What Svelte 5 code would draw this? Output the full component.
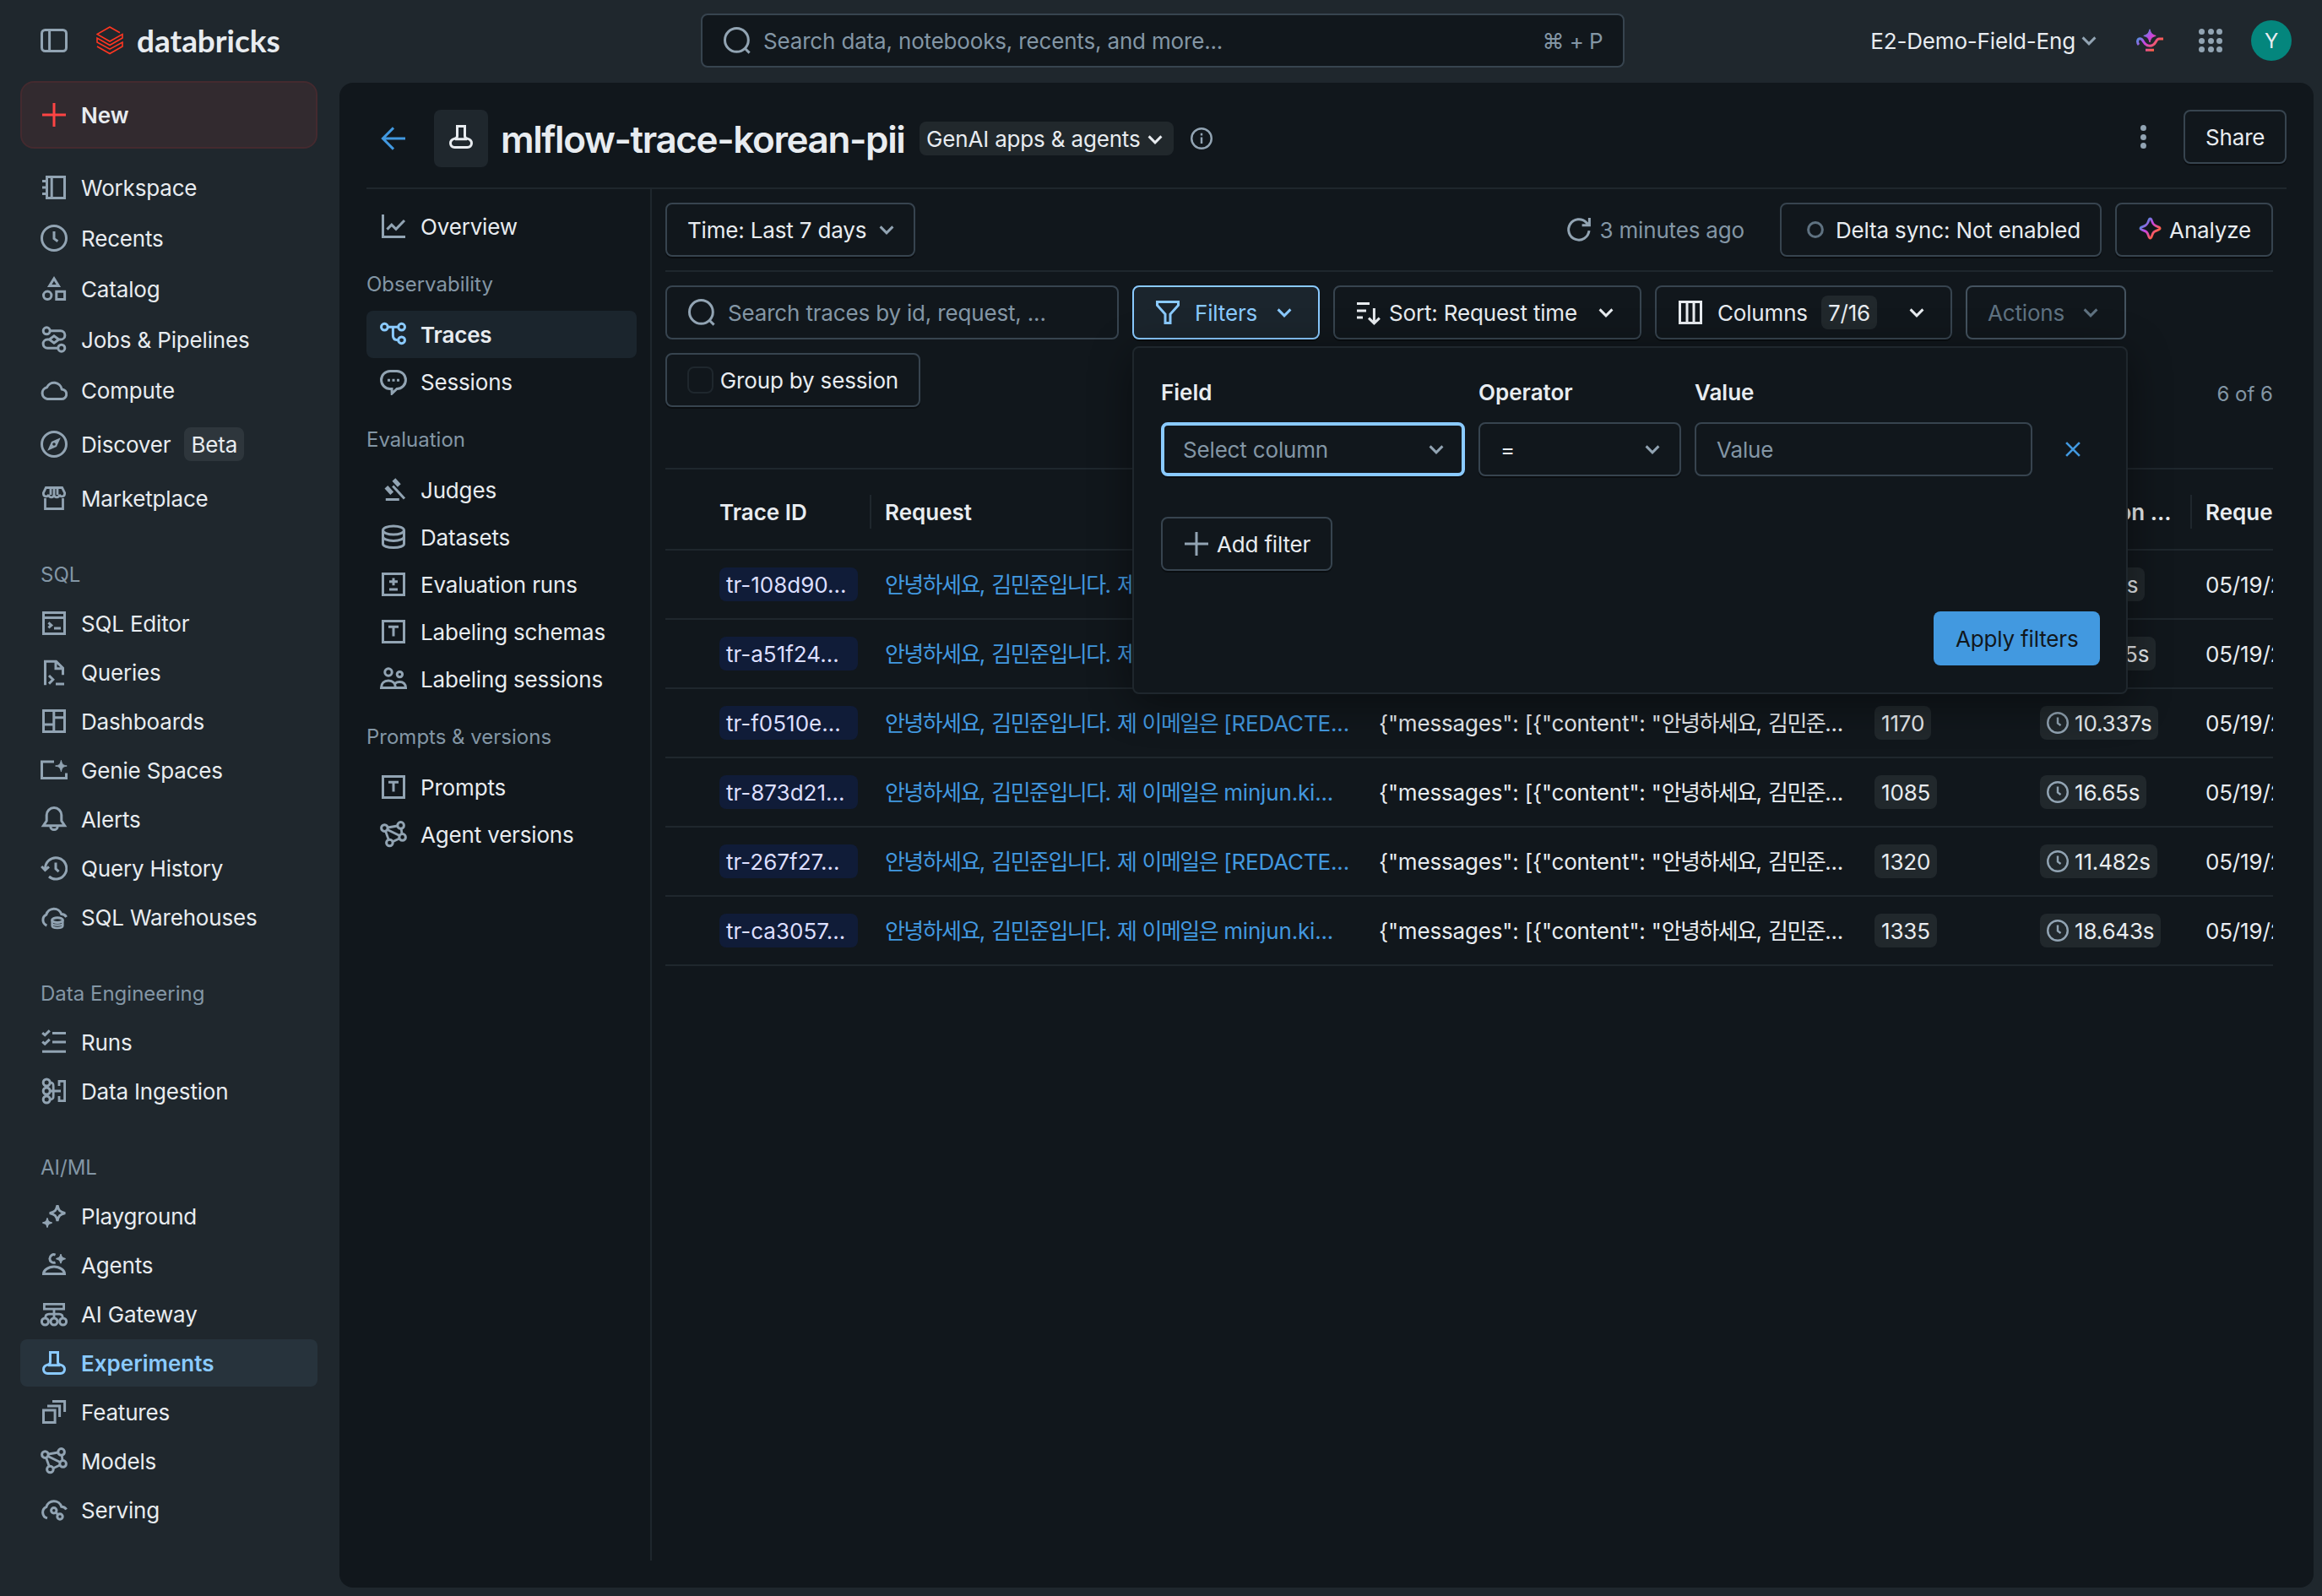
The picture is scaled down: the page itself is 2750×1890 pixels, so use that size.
<script lang="ts">
	const ICONS: Record<string, string> = {
		plus: '<path d="M8 1v14M1 8h14"/>',
		notebook: '<path d="M3.75 1.75h10.5v12.5H3.75zM6.6 1.75v12.5M1 4.2h2.5M1 8h2.5M1 11.8h2.5"/>',
		clock: '<circle cx="8" cy="8" r="7.25"/><path d="M8 4v4.3l2.2 1.6"/>',
		catalog: '<path d="M8 1.9l2.7 4.4H5.3z"/><circle cx="4.1" cy="11.9" r="2.35"/><path d="M9.4 9.6h4.9v4.6H9.4z"/>',
		jobs: '<circle cx="3.6" cy="2.9" r="2"/><circle cx="12.4" cy="13.1" r="2"/><path d="M5.7 2.9h6.2a2.5 2.5 0 0 1 0 5.1H10.8L8 5.9 5.2 8 8 10.1 10.8 8M5.2 8H4.1a2.5 2.5 0 0 0 0 5.1h6.2"/>',
		cloud: '<path d="M4 13.25h8.3a2.9 2.9 0 0 0 .3-5.8A4.7 4.7 0 0 0 3.7 6.4 3.5 3.5 0 0 0 4 13.25z"/>',
		compass: '<circle cx="8" cy="8" r="7.25"/><path d="M11.9 4.1L9.5 9.5 4.1 11.9 6.5 6.5zM8 7.1a.9.9 0 1 0 0 1.8.9.9 0 0 0 0-1.8z" fill="currentColor" fill-rule="evenodd" stroke="none"/>',
		store: '<path d="M2.75 8v6.25h10.5V8M3.2 1.75h9.6l1.5 3v.7a1.6 1.6 0 0 1-3.1.4 1.6 1.6 0 0 1-3.2 0 1.6 1.6 0 0 1-3.2 0 1.6 1.6 0 0 1-3.1-.4v-.7zM6 2v4M8 2v4M10 2v4" stroke-width="1.4"/>',
		sql: '<path d="M1.75 1.75h12.5v12.5H1.75zM1.75 4.8h12.5M4.7 7.7L6.4 9.2 4.7 10.7M8 11h4"/>',
		query: '<path d="M2.75 15.6V1.6h6.5l4 4v4M9 2v3.9h4M5 10l2.4 2.4L5 14.8M9 15h5"/>',
		dashboard: '<path d="M1.75 1.75h12.5v12.5H1.75zM7.9 2v12M8 5.9h6M2 10h6"/>',
		genie: '<path d="M8 3H.75v9.7h14.5V9.8"/><path d="M12.2 2.2c.5 2.3 1 2.9 3.4 3.3-2.4.5-2.9 1-3.4 3.4-.5-2.4-1-2.9-3.4-3.4 2.4-.4 2.9-1 3.4-3.3z" fill="currentColor" stroke-width=".5"/>',
		bell: '<path d="M8 1.25a4.4 4.4 0 0 0-4.4 4.4v3.4l-1.9 2.8h12.6l-1.9-2.8V5.65A4.4 4.4 0 0 0 8 1.25zM5.9 12.2a2.1 2.1 0 0 0 4.2 0"/>',
		history: '<path d="M2.8 8.6A6.3 6.3 0 1 1 5 13M.6 7l2.1 2.2L5 7.2"/><path d="M9 4.7v3.7l1.8 1.7"/>',
		warehouse: '<path d="M3.7 13A3.5 3.5 0 0 1 3.4 6.6 4.7 4.7 0 0 1 12.4 6.3 3.4 3.4 0 0 1 15.3 8"/><ellipse cx="10" cy="9.8" rx="3.2" ry="1.4"/><path d="M6.8 9.8v3.3c0 .8 1.4 1.4 3.2 1.4s3.2-.6 3.2-1.4V9.8M6.8 11.6c0 .8 1.4 1.2 3.2 1.2s3.2-.4 3.2-1.2" stroke-width="1.2"/>',
		runs: '<path d="M7 2.8h8M7 8h8M1 13.6h14M1.1 2.6l1.5 1.3L5.4 1.2M1.1 7.8l1.5 1.3 2.8-2.7"/>',
		ingestion: '<circle cx="3.6" cy="3" r="2"/><circle cx="3.6" cy="8" r="2"/><circle cx="3.6" cy="13" r="2"/><path d="M5.6 3c2 0 2 1 2 2.5v5c0 1.5 0 2.5-2 2.5M5.6 8H12M11 5V2.2h3.3v11.6H11V11" stroke-width="1.4"/>',
		playground: '<path d="M10 1.7c.7 3.1 1.4 3.8 4.6 4.6-3.2.8-3.9 1.5-4.6 4.6-.7-3.1-1.4-3.8-4.6-4.6 3.2-.8 3.9-1.5 4.6-4.6z"/><path d="M4 9.2c.4 2 .8 2.4 2.8 2.8-2 .4-2.4.8-2.8 2.8-.4-2-.8-2.4-2.8-2.8 2-.4 2.4-.8 2.8-2.8z" fill="currentColor" stroke-width=".7"/>',
		agents: '<path d="M8.8 2A2.4 2.4 0 1 0 8.8 6.4M1.75 13.25c0-2 2.7-4.3 6.25-4.3s6.25 2.3 6.25 4.3z"/><path d="M12 1.5c.4 1.9.9 2.4 2.8 2.8-1.9.4-2.4.9-2.8 2.8-.4-1.9-.9-2.4-2.8-2.8 1.9-.4 2.4-.9 2.8-2.8z" fill="currentColor" stroke-width=".6"/>',
		gateway: '<path d="M2.2 2.2h11.6v2.9H2.2zM8 5.1v5M2.8 10.6c0-1.7.8-2.5 2.2-2.5h6c1.4 0 2.2.8 2.2 2.5" stroke-width="1.4"/><circle cx="2.7" cy="12.5" r="2"/><circle cx="8" cy="12.5" r="2"/><circle cx="13.3" cy="12.5" r="2"/>',
		beaker: '<path d="M5.75 1.75h4.5V7.6c0 .9.6 1.3 1.8 1.6 1.4.4 2.2 1.3 2.2 2.6 0 1.5-1 2.45-2.5 2.45h-7.5c-1.5 0-2.5-.95-2.5-2.45 0-1.3.8-2.2 2.2-2.6 1.2-.3 1.8-.7 1.8-1.6zM4.5 9.4h7"/>',
		features: '<path d="M1.75 7h6.8v7.2H1.75zM4 4.5h7.3v6.5M7 1.75h7.3v6.3"/>',
		models: '<circle cx="2.7" cy="4.3" r="1.9"/><circle cx="12.3" cy="2.7" r="1.9"/><circle cx="13.3" cy="9.7" r="1.9"/><circle cx="5.7" cy="13" r="1.9"/><path d="M4.6 4L10.4 3M3.3 6.1l1.8 5M12.6 4.6l.4 3.2M7.5 12.4l4-1.9M4.4 5.2l7.2 3.6" stroke-width="1.4"/>',
		serving: '<path d="M4 12.9A3.5 3.5 0 0 1 3.4 6.3 4.7 4.7 0 0 1 12.4 6.1 3.5 3.5 0 0 1 15.3 7.8"/><circle cx="7.9" cy="8.4" r="1.6"/><circle cx="11.5" cy="12" r="1.6"/><path d="M9 9.5l1.4 1.4"/>',
		chart: '<path d="M1.75 1v13.25H15M4.2 9.8l2.7-2.7 2.6 2.6 5-5.2"/>',
		traces: '<circle cx="2.7" cy="3.6" r="1.95"/><circle cx="12.8" cy="3.6" r="1.95"/><circle cx="12.8" cy="11.4" r="1.95"/><path d="M4.6 3.6h6.2M7.7 3.6v5.2c0 1.7.8 2.6 3 2.6"/>',
		chat: '<path d="M7 12.2H6A5.2 5.2 0 0 1 6 1.75h4a5.2 5.2 0 0 1 0 10.45L7.1 15z"/><path d="M4.5 7.1h1.5M7.25 7.1h1.5M10 7.1h1.5"/>',
		gavel: '<path d="M3.4 13.8h8M7.6 5.7l6.9 7.5"/><path d="M3.7 6.4l3.4 3.7M8.2 2l3.2 3.5" stroke-width="2.6"/>',
		database: '<ellipse cx="8" cy="4" rx="6.25" ry="2.5"/><path d="M1.75 4v8c0 1.3 2.6 2.25 6.25 2.25s6.25-.95 6.25-2.25V4M1.75 7.8c0 1.3 2.6 2.4 6.25 2.4s6.25-1.1 6.25-2.4"/>',
		plusminus: '<path d="M1.75 1.75h12.5v12.5H1.75zM8 4.2v4.4M5.5 6.4h5M5.5 11h5"/>',
		text: '<path d="M1.75 1.75h12.5v12.5H1.75zM5 5.1h6M8 5.1v5.7"/>',
		people: '<circle cx="5" cy="4" r="2.1"/><circle cx="11.7" cy="5.3" r="1.6"/><path d="M.75 13.25c0-2.6 1.7-4.2 4.25-4.2s4.25 1.6 4.25 4.2zM9.3 13.25h5.95c0-2.2-1.4-3.5-3.6-3.5-1.1 0-2 .3-2.7.9"/>',
		search: '<circle cx="7.7" cy="7.7" r="6.95"/><path d="M12.6 12.6l2.7 2.7"/>',
		chevron: '<path d="M4.3 6.2L8 9.9l3.7-3.7"/>',
		back: '<path d="M15 8H2M8 1.7L1.7 8 8 14.3"/>',
		info: '<circle cx="8" cy="8" r="7.25"/><path d="M8 7v4.7M8 4.2v1.6"/>',
		refresh: '<path d="M14 8.6a6.1 6.1 0 1 1-1.7-4.9l1.6 1.5M14.2 1v4.4H9.8"/>',
		filter: '<path d="M1.75 1.75h12.5v2L9.5 9v5.25h-3V9L1.75 3.75z"/>',
		sort: '<path d="M1 2.8h7.5M1 7h5.5M1 11h3.5M11.2 5.5v8.8M8 11.3l3.2 3.1 3.2-3.1"/>',
		columns: '<path d="M1.75 1.75h12.5v12.5H1.75zM6 2v12M10 2v12"/>',
		close: '<path d="M3.5 3.5l9 9M12.5 3.5l-9 9"/>',
		ring: '<circle cx="8" cy="8" r="4.2"/>',
		sidebar: '<rect x=".75" y="1.75" width="14.5" height="12.5" rx="2"/><path d="M5.3 2v12"/>',
	};

	const mainNav = [
		{ icon: 'notebook', label: 'Workspace' },
		{ icon: 'clock', label: 'Recents' },
		{ icon: 'catalog', label: 'Catalog' },
		{ icon: 'jobs', label: 'Jobs & Pipelines' },
		{ icon: 'cloud', label: 'Compute' },
		{ icon: 'compass', label: 'Discover', badge: 'Beta' },
		{ icon: 'store', label: 'Marketplace' },
	];

	const navGroups = [
		{
			title: 'SQL',
			items: [
				{ icon: 'sql', label: 'SQL Editor' },
				{ icon: 'query', label: 'Queries' },
				{ icon: 'dashboard', label: 'Dashboards' },
				{ icon: 'genie', label: 'Genie Spaces' },
				{ icon: 'bell', label: 'Alerts' },
				{ icon: 'history', label: 'Query History' },
				{ icon: 'warehouse', label: 'SQL Warehouses' },
			],
		},
		{
			title: 'Data Engineering',
			items: [
				{ icon: 'runs', label: 'Runs' },
				{ icon: 'ingestion', label: 'Data Ingestion' },
			],
		},
		{
			title: 'AI/ML',
			items: [
				{ icon: 'playground', label: 'Playground' },
				{ icon: 'agents', label: 'Agents' },
				{ icon: 'gateway', label: 'AI Gateway' },
				{ icon: 'beaker', label: 'Experiments', active: true },
				{ icon: 'features', label: 'Features' },
				{ icon: 'models', label: 'Models' },
				{ icon: 'serving', label: 'Serving' },
			],
		},
	];

	const tabGroups = [
		{ title: '', items: [{ icon: 'chart', label: 'Overview' }] },
		{
			title: 'Observability',
			items: [
				{ icon: 'traces', label: 'Traces', active: true },
				{ icon: 'chat', label: 'Sessions' },
			],
		},
		{
			title: 'Evaluation',
			items: [
				{ icon: 'gavel', label: 'Judges' },
				{ icon: 'database', label: 'Datasets' },
				{ icon: 'plusminus', label: 'Evaluation runs' },
				{ icon: 'text', label: 'Labeling schemas' },
				{ icon: 'people', label: 'Labeling sessions' },
			],
		},
		{
			title: 'Prompts & versions',
			items: [
				{ icon: 'text', label: 'Prompts' },
				{ icon: 'models', label: 'Agent versions' },
			],
		},
	];

	const redacted = '안녕하세요, 김민준입니다. 제 이메일은 [REDACTE...';
	const email = '안녕하세요, 김민준입니다. 제 이메일은 minjun.ki...';
	const response = '{"messages": [{"content": "안녕하세요, 김민준...';

	const traces = [
		{ id: 'tr-108d90...', request: redacted, tokens: '1210', time: '9.317s' },
		{ id: 'tr-a51f24...', request: email, tokens: '1148', time: '11.325s' },
		{ id: 'tr-f0510e...', request: redacted, tokens: '1170', time: '10.337s' },
		{ id: 'tr-873d21...', request: email, tokens: '1085', time: '16.65s' },
		{ id: 'tr-267f27...', request: redacted, tokens: '1320', time: '11.482s' },
		{ id: 'tr-ca3057...', request: email, tokens: '1335', time: '18.643s' },
	];

	// Hangul is set tighter than the Latin text around it
	const runs = (s: string) => s.split(/([\uac00-\ud7a3]+)/).filter(Boolean);
	const isHangul = (s: string) => /^[\uac00-\ud7a3]/.test(s);
</script>

{#snippet icon(name: string, cls = '')}
	<svg class="icon {cls}" viewBox="0 0 16 16" fill="none" stroke="currentColor" stroke-width="1.5">
		{@html ICONS[name]}
	</svg>
{/snippet}

{#snippet mixed(text: string)}
	<span>{#each runs(text) as part}<span class:ko={isHangul(part)}>{part}</span>{/each}</span>
{/snippet}

<div class="app">
	<header class="topbar">
		<div class="brand">
			{@render icon('sidebar')}
			<svg class="logo" viewBox="0 0 32 34" fill="none" stroke="#ff3621" stroke-width="1.6">
				<path d="M28 7.8L16 1 1 9.5 16 18 31 9.5V14L16 22.5 1 14v5l15 8.2L31 19v5l-15 8.5L1 24" />
			</svg>
			<span class="wordmark">databricks</span>
		</div>
		<div class="global-search">
			{@render icon('search')}
			<span class="placeholder">Search data, notebooks, recents, and more...</span>
			<span class="shortcut">⌘ + P</span>
		</div>
		<div class="account">
			<span class="ws">E2-Demo-Field-Eng</span>
			{@render icon('chevron')}
			<svg class="lamp" viewBox="0 0 16 16" fill="none" stroke="url(#ai)" stroke-width="1.5">
				<defs>
					<linearGradient id="ai" x1="1" y1="3" x2="13" y2="14" gradientUnits="userSpaceOnUse">
						<stop offset="0.1" stop-color="#4299e0" />
						<stop offset="0.45" stop-color="#ca42e0" />
						<stop offset="0.85" stop-color="#ff5f46" />
					</linearGradient>
				</defs>
				<path d="M1.5 10.5C.4 9.4.5 6.9 2.3 6.9c2.3 0 1.7 4.2 5.7 4.2 4.1 0 3.2-4.1 5.5-4.1H16M5.5 13.6h5" />
				<path d="M8 1.4c.8 2.5 1.1 2.9 3.6 3.8C9.1 6 8.7 6.5 8 9 7.3 6.5 6.9 6 4.4 5.2 6.9 4.3 7.2 3.9 8 1.4z" fill="url(#ai)" stroke-width=".5" />
			</svg>
			<div class="grid-dots">
				{#each Array(9) as _}<i></i>{/each}
			</div>
			<div class="avatar">Y</div>
		</div>
	</header>

	<div class="body">
		<nav class="sidebar">
			<button class="new">{@render icon('plus')}<span>New</span></button>
			<div class="primary">
				{#each mainNav as item}
					<div class="nav-item" class:tall={item.badge}>
						{@render icon(item.icon)}
						<span>{item.label}</span>
						{#if item.badge}<span class="tag">{item.badge}</span>{/if}
					</div>
				{/each}
			</div>
			{#each navGroups as group}
				<div class="group">
					<div class="group-title">{group.title}</div>
					{#each group.items as item}
						<div class="nav-item" class:active={item.active}>
							{@render icon(item.icon)}
							<span>{item.label}</span>
						</div>
					{/each}
				</div>
			{/each}
		</nav>

		<main>
			<div class="title-bar">
				{@render icon('back', 'link')}
				<div class="kind">{@render icon('beaker')}</div>
				<h1>mlflow-trace-korean-pii</h1>
				<span class="tag app-type">GenAI apps &amp; agents{@render icon('chevron')}</span>
				{@render icon('info', 'small')}
				<div class="kebab"><i></i><i></i><i></i></div>
				<button class="btn share"><span>Share</span></button>
			</div>

			<div class="columns">
				<aside>
					{#each tabGroups as group}
						{#if group.title}<div class="tab-title">{group.title}</div>{/if}
						{#each group.items as item}
							<div class="tab" class:current={item.active}>
								{@render icon(item.icon)}
								<span>{item.label}</span>
							</div>
						{/each}
					{/each}
				</aside>

				<section>
					<div class="row time-row">
						<button class="btn time"><span>Time: Last 7 days</span>{@render icon('chevron', 'muted')}</button>
						<div class="refreshed">{@render icon('refresh')}<span>3 minutes ago</span></div>
						<button class="btn delta">{@render icon('ring', 'dim')}<span>Delta sync: Not enabled</span></button>
						<button class="btn analyze">
							<svg class="spark" viewBox="0 0 16 16" fill="none" stroke="url(#ai)" stroke-width="1.7">
								<path d="M8 1.2c.7 0 .8.5 1.2 1.7.8 2.3 1.5 3.1 3.9 3.9 1.2.4 1.7.5 1.7 1.2s-.5.8-1.7 1.2c-2.4.8-3.1 1.5-3.9 3.9-.4 1.2-.5 1.7-1.2 1.7s-.8-.5-1.2-1.7c-.8-2.4-1.5-3.1-3.9-3.9C1.7 8.8 1.2 8.7 1.2 8s.5-.8 1.7-1.2c2.4-.8 3.1-1.6 3.9-3.9C7.2 1.7 7.3 1.2 8 1.2z" />
							</svg>
							<span>Analyze</span>
						</button>
					</div>

					<div class="row tools">
						<div class="search">{@render icon('search')}<span>Search traces by id, request, ...</span></div>
						<div class="filter-anchor">
							<button class="btn filters">{@render icon('filter')}<span>Filters</span>{@render icon('chevron')}</button>
							<div class="popover">
								<div class="fields">
									<label class="field">
										<b>Field</b>
										<div class="control focused"><span>Select column</span>{@render icon('chevron')}</div>
									</label>
									<label class="field">
										<b>Operator</b>
										<div class="control"><span class="value">=</span>{@render icon('chevron')}</div>
									</label>
									<label class="field">
										<b>Value</b>
										<div class="control flat"><span>Value</span></div>
									</label>
									{@render icon('close', 'remove')}
								</div>
								<button class="btn add">{@render icon('plus', 'muted')}<span>Add filter</span></button>
								<button class="btn apply"><span>Apply filters</span></button>
							</div>
						</div>
						<button class="btn sort">{@render icon('sort')}<span>Sort: Request time</span>{@render icon('chevron')}</button>
						<button class="btn cols">{@render icon('columns')}<span>Columns</span><span class="tag">7/16</span>{@render icon('chevron')}</button>
						<button class="btn actions"><span>Actions</span>{@render icon('chevron')}</button>
					</div>

					<div class="row session-row">
						<button class="btn session"><i class="checkbox"></i><span>Group by session</span></button>
						<span class="count">6 of 6</span>
					</div>

					<div class="table">
						<div class="tr head">
							<div></div>
							<div class="td">Trace ID</div>
							<div class="td">Request</div>
							<div class="td">Response</div>
							<div class="td">Tokens</div>
							<div class="td">Execution ...</div>
							<div class="td">Request time</div>
						</div>
						{#each traces as t}
							<div class="tr">
								<div></div>
								<div class="td"><span class="tag trace-id">{t.id}</span></div>
								<div class="td request">{@render mixed(t.request)}</div>
								<div class="td">{@render mixed(response)}</div>
								<div class="td"><span class="tag">{t.tokens}</span></div>
								<div class="td"><span class="tag exec">{@render icon('clock')}{t.time}</span></div>
								<div class="td date"><span>05/19/2025</span></div>
							</div>
						{/each}
					</div>
				</section>
			</div>
		</main>
	</div>
</div>

<style>
	:global(body) {
		margin: 0;
		background: #1f272d;
	}

	.app {
		width: 2750px;
		height: 1890px;
		overflow: hidden;
		display: flex;
		flex-direction: column;
		background: #1f272d;
		color: #e8ecf0;
		font-family: Inter, "Noto Sans CJK KR", sans-serif;
		font-size: 26px;
		line-height: 40px;
		letter-spacing: -0.17px;
		white-space: nowrap;
	}

	* {
		box-sizing: border-box;
	}

	/* optical centring of labels next to icons */
	span {
		padding-top: 2px;
	}

	.icon {
		width: 32px;
		height: 32px;
		flex: none;
		color: #92a4b3;
	}

	.tag {
		display: inline-flex;
		align-items: center;
		height: 40px;
		padding: 2px 8px 0;
		border-radius: 8px;
		background: rgba(232, 236, 240, 0.08);
	}

	/* top bar */
	.topbar {
		height: 98px;
		flex: none;
		display: grid;
		grid-template-columns: 830px 1094px 1fr;
		padding-bottom: 2px;
		align-items: center;
	}

	.brand {
		display: flex;
		align-items: center;
		padding-left: 48px;
	}

	.logo {
		width: 32px;
		height: 34px;
		margin-left: 34px;
	}

	.wordmark {
		margin-left: 16px;
		padding: 0;
		font-family: Lato, sans-serif;
		font-weight: 700;
		font-size: 37px;
		letter-spacing: -0.05px;
	}

	.global-search {
		height: 64px;
		display: flex;
		align-items: center;
		padding: 0 24px 0 25px;
		border: 2px solid #37444f;
		border-radius: 8px;
		background: #11171c;
		color: #8396a5;
	}

	.placeholder {
		margin-left: 15px;
		flex: 1;
	}

	.shortcut {
		letter-spacing: -0.6px;
	}

	.account {
		display: flex;
		align-items: center;
		justify-content: flex-end;
		padding-right: 36px;
	}

	.lamp {
		width: 32px;
		height: 32px;
		margin-left: 40px;
	}

	.grid-dots {
		display: grid;
		grid-template-columns: repeat(3, 7px);
		gap: 3.5px;
		margin: 0 34px 0 42px;
	}

	.grid-dots i,
	.kebab i {
		width: 7px;
		height: 7px;
		border-radius: 50%;
		background: #92a4b3;
	}

	.avatar {
		width: 48px;
		height: 48px;
		border-radius: 50%;
		background: #04867d;
		text-align: center;
		font-size: 24px;
		line-height: 50px;
	}

	.body {
		flex: 1;
		display: flex;
	}

	/* sidebar */
	.sidebar {
		width: 402px;
		padding: 0 26px 0 24px;
		margin-top: -2px;
	}

	.new {
		display: flex;
		align-items: center;
		gap: 16px;
		width: 352px;
		height: 80px;
		padding: 0 22px;
		border: 2px solid #442a2f;
		border-radius: 16px;
		background: #322a2f;
		color: inherit;
		font: inherit;
		font-weight: 600;
	}

	.new .icon {
		color: #ff4444;
	}

	.primary {
		margin-top: 16px;
	}

	.nav-item {
		display: flex;
		align-items: center;
		gap: 16px;
		height: 56px;
		margin-bottom: 2px;
		padding-left: 24px;
		border-radius: 8px;
	}

	.primary .nav-item {
		height: 60px;
		margin: 0;
	}

	.primary .tall {
		height: 68px;
	}

	.active {
		background: #27333c;
		color: #8acaff;
		font-weight: 600;
		letter-spacing: 0;
	}

	.active .icon {
		color: #8acaff;
	}

	.group-title {
		margin-top: 32px;
		height: 60px;
		padding: 11px 24px 0;
		font-size: 24px;
		letter-spacing: 0;
		color: #8396a5;
	}

	.primary + .group .group-title {
		margin-top: 30px;
	}

	/* main panel */
	main {
		width: 2338px;
		height: 1782px;
		padding: 0 32px;
		border-radius: 16px;
		background: #11171c;
	}

	.title-bar {
		height: 126px;
		display: flex;
		align-items: center;
		border-bottom: 2px solid #1f272d;
		padding: 8px 0 0 16px;
	}

	.link {
		color: #4299e0;
	}

	.kind {
		width: 64px;
		height: 68px;
		margin-left: 32px;
		display: grid;
		place-items: center;
		padding-bottom: 4px;
		border-radius: 8px;
		background: #1f272d;
	}

	.kind .icon {
		color: #e8ecf0;
	}

	h1 {
		width: 480px;
		margin: 0 0 0 15px;
		padding-top: 1px;
		font-size: 44px;
		font-weight: 600;
		letter-spacing: -1.38px;
	}

	.app-type {
		margin-left: 16px;
		width: 301px;
	}

	.app-type .icon {
		color: #e8ecf0;
		margin-left: 1px;
	}

	.small {
		width: 26px;
		height: 26px;
		margin-left: 20px;
	}

	.kebab {
		margin: 0 44px 4px auto;
		display: grid;
		gap: 3.5px;
	}

	.btn {
		display: flex;
		align-items: center;
		height: 64px;
		padding: 0 24px;
		border: 2px solid #37444f;
		border-radius: 8px;
		background: #11171c;
		box-shadow: 0 2px 0 rgba(0, 0, 0, 0.4);
		color: #e8ecf0;
		font: inherit;
		letter-spacing: inherit;
	}

	.btn .icon {
		color: #e8ecf0;
	}

	.btn .muted {
		color: #92a4b3;
	}

	.btn .dim {
		color: #5f7281;
	}

	.share {
		width: 122px;
		margin-bottom: 4px;
	}

	.columns {
		display: flex;
		height: 1624px;
	}

	aside {
		width: 338px;
		flex: none;
		padding: 16px 16px 0 0;
		border-right: 2px solid #1f272d;
	}

	.tab {
		display: flex;
		align-items: center;
		gap: 16px;
		height: 56px;
		padding-left: 16px;
		border-radius: 8px;
	}

	.current {
		background: #1b252d;
		font-weight: 600;
	}

	.current .icon {
		color: #8acaff;
	}

	.tab-title {
		height: 72px;
		padding-top: 21px;
		font-size: 24px;
		letter-spacing: 0;
		color: #8396a5;
	}

	section {
		width: 1904px;
		margin-left: 16px;
	}

	.row {
		display: flex;
		align-items: center;
		gap: 16px;
	}

	.time-row {
		height: 98px;
		border-bottom: 2px solid #1f272d;
	}

	.time {
		width: 296px;
		padding-right: 16px;
	}

	.refreshed {
		margin: 0 26px 0 auto;
		display: flex;
		align-items: center;
		gap: 8px;
		color: #8396a5;
	}

	.delta {
		width: 381px;
	}

	.analyze {
		width: 187px;
	}

	.spark {
		width: 29px;
		height: 29px;
		margin: -3px 1px 0 2px;
	}

	.tools {
		height: 96px;
	}

	.search {
		width: 537px;
		height: 64px;
		display: flex;
		align-items: center;
		gap: 15px;
		padding: 0 25px;
		border: 2px solid #37444f;
		border-radius: 8px;
		color: #8396a5;
	}

	.filter-anchor {
		position: relative;
	}

	.filters {
		width: 222px;
		background: #1b252d;
		border-color: #8acaff;
		color: #8acaff;
	}

	.filters .icon {
		color: #8acaff;
	}

	.time .icon,
	.filters .icon:last-child,
	.sort .icon:last-child,
	.cols .icon:last-child,
	.actions .icon:last-child,
	.control .icon {
		margin-left: auto;
	}

	.filters span {
		margin-left: 16px;
	}

	.sort {
		width: 365px;
	}

	.sort span {
		margin-left: 8px;
	}

	.cols {
		width: 352px;
	}

	.cols span {
		margin-left: 16px;
	}

	.actions {
		width: 190px;
		color: #5f7281;
		border-color: #44535f;
		box-shadow: none;
	}

	.actions .icon {
		color: #5f7281;
	}

	.session-row {
		height: 136px;
		align-items: flex-start;
		justify-content: space-between;
	}

	.session {
		width: 302px;
	}

	.checkbox {
		width: 32px;
		height: 32px;
		margin-right: 8px;
		border: 2px solid #1f272d;
		border-radius: 8px;
	}

	.count {
		margin-top: 27px;
		font-size: 24px;
		letter-spacing: 0;
		color: #8396a5;
	}

	/* filter popover */
	.popover {
		position: absolute;
		top: 72px;
		left: 0;
		z-index: 1;
		width: 1179px;
		height: 412px;
		padding: 33px 31px 32px 32px;
		display: flex;
		flex-direction: column;
		border: 2px solid #1f272d;
		border-radius: 8px;
		background: #11171c;
		box-shadow: 0 10px 50px rgba(0, 0, 0, 0.45);
	}

	.fields {
		display: grid;
		grid-template-columns: 360px 240px 400px 32px;
		column-gap: 16px;
		align-items: end;
	}

	.field b {
		display: block;
		margin-bottom: 15px;
		font-weight: 600;
		letter-spacing: 0;
	}

	.control {
		display: flex;
		align-items: center;
		height: 64px;
		padding: 0 16px 0 24px;
		border: 2px solid #37444f;
		border-radius: 8px;
		box-shadow: 0 2px 0 rgba(0, 0, 0, 0.4);
		color: #8396a5;
	}

	.focused {
		border: 4px solid #8acaff;
		padding: 0 14px 0 22px;
	}

	.flat {
		box-shadow: none;
	}

	.value {
		color: #e8ecf0;
	}

	.remove {
		width: 28px;
		height: 28px;
		margin: 0 0 18px 18px;
		color: #4299e0;
	}

	.add {
		width: 203px;
		margin-top: 48px;
		align-self: flex-start;
	}

	.add span,
	.analyze span,
	.delta span {
		margin-left: 8px;
	}

	.apply {
		width: 197px;
		margin-top: auto;
		align-self: flex-end;
		border: 0;
		padding: 0 26px;
		background: #4299e0;
		color: #11171c;
		box-shadow: none;
	}

	/* table */
	.table {
		border-top: 2px solid #1f272d;
		overflow: hidden;
	}

	.tr {
		display: grid;
		grid-template-columns: 48px 196px 585px 587px 196px 196px 300px;
		align-items: center;
		height: 82px;
		border-bottom: 2px solid #1f272d;
	}

	.td {
		display: flex;
		align-items: center;
		padding-left: 16px;
	}

	.head {
		height: 96px;
		padding-top: 6px;
		font-weight: 600;
		letter-spacing: 0;
	}

	.head .td {
		height: 40px;
		padding-top: 2px;
		border-right: 2px solid #1f272d;
	}

	.request {
		color: #4299e0;
	}

	.ko {
		letter-spacing: -1.55px;
	}

	.trace-id {
		width: 164px;
		background: #101c38;
		color: #dcdfff;
		letter-spacing: 0;
	}

	.exec {
		gap: 7px;
	}

	.exec .icon {
		width: 26px;
		height: 26px;
		margin-top: -2px;
	}
</style>
